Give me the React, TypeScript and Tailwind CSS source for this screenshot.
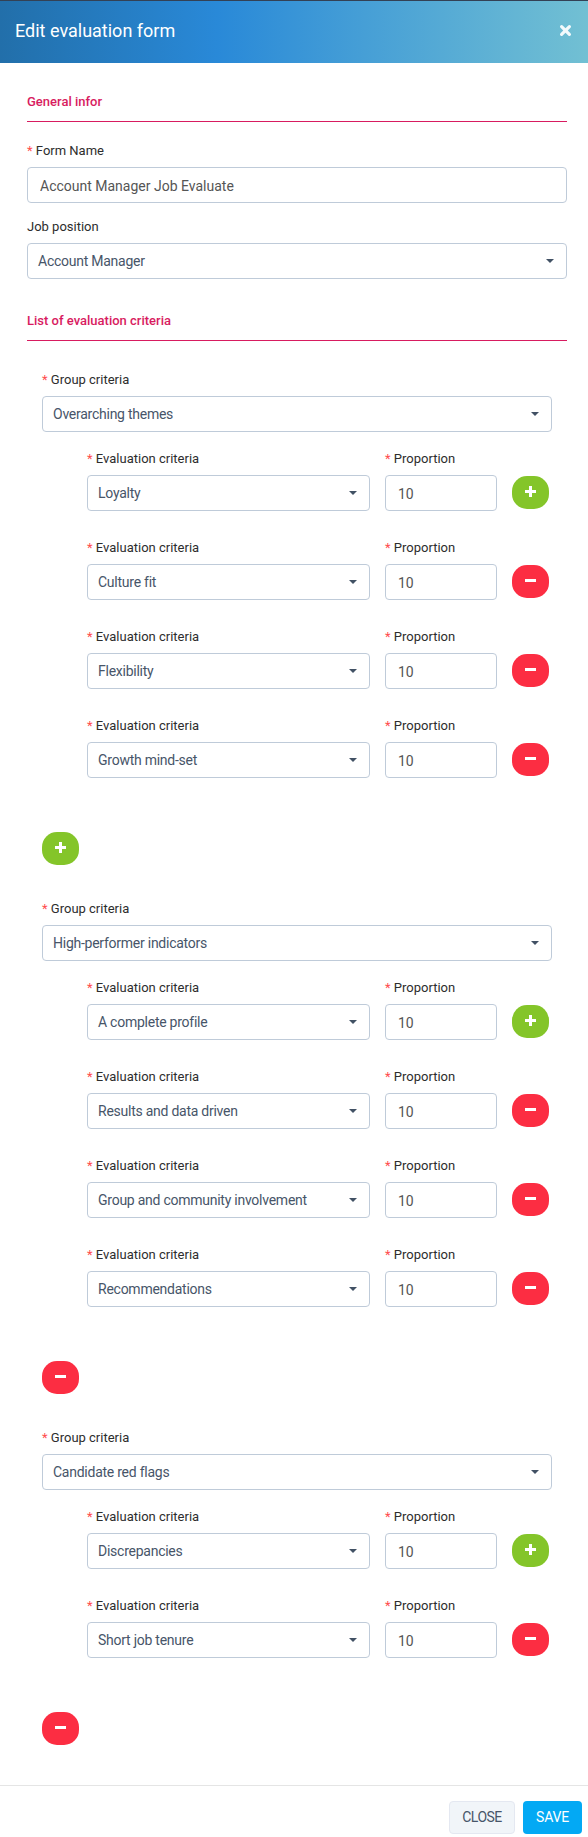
import React from 'react';

interface Criteria {
  name: string;
  proportion: number;
}

interface Group {
  name: string;
  criteria: Criteria[];
}

const GROUPS: Group[] = [
  {
    name: 'Overarching themes',
    criteria: [
      { name: 'Loyalty', proportion: 10 },
      { name: 'Culture fit', proportion: 10 },
      { name: 'Flexibility', proportion: 10 },
      { name: 'Growth mind-set', proportion: 10 },
    ],
  },
  {
    name: 'High-performer indicators',
    criteria: [
      { name: 'A complete profile', proportion: 10 },
      { name: 'Results and data driven', proportion: 10 },
      { name: 'Group and community involvement', proportion: 10 },
      { name: 'Recommendations', proportion: 10 },
    ],
  },
  {
    name: 'Candidate red flags',
    criteria: [
      { name: 'Discrepancies', proportion: 10 },
      { name: 'Short job tenure', proportion: 10 },
    ],
  },
];

const Label = ({ text, required = true }: { text: string; required?: boolean }) => (
  <div className="h-5 mb-1.5 text-[13px] leading-5 text-[#2d2d2d] whitespace-nowrap">
    {required && <span className="text-[#ff4d4d]">* </span>}
    {text}
  </div>
);

const SelectBox = ({ value }: { value: string }) => (
  <button className="flex w-full h-9 items-center justify-between rounded border border-[#bfcbd9] bg-white pl-2.5 pr-3 pt-px text-left text-[14px] tracking-[-0.25px] text-[#475569]">
    <span className="whitespace-nowrap">{value}</span>
    <svg width="8" height="4" viewBox="0 0 8 4" className="mb-px">
      <path d="M0 0h8L4 4z" fill="#415164" />
    </svg>
  </button>
);

const TextBox = ({ value }: { value: string | number }) => (
  <input
    defaultValue={value}
    className="block w-full h-9 rounded border border-[#bfcbd9] bg-white px-3 pt-px text-[14px] text-[#555555] outline-none"
  />
);

const RoundButton = ({ type }: { type: 'add' | 'remove' }) => (
  <button
    className={`flex h-[33px] w-[37px] shrink-0 items-center justify-center rounded-[15px] pb-0.5 ${type === 'add' ? 'bg-[#84c529]' : 'bg-[#fc2d42]'}`}
  >
    <svg width="11" height="11" viewBox="0 0 11 11" fill="#ffffff">
      <rect x="0" y="4" width="11" height="3" />
      {type === 'add' && <rect x="4" y="0" width="3" height="11" />}
    </svg>
  </button>
);

const SectionTitle = ({ text }: { text: string }) => (
  <h5 className="h-[30px] border-b border-[#d81b60] text-[13px] font-medium leading-5 text-[#d81b60]">{text}</h5>
);

const App: React.FC = () => {
  return (
    <div className="min-h-[1837px] w-full border-t border-[#334155] bg-white font-['Roboto',sans-serif]">
      {/* Header */}
      <div className="flex h-[62px] items-center justify-between bg-[linear-gradient(to_right,#226faa_0%,#2989d8_37%,#72c0d3_100%)] pl-[15px] pr-4 pb-[3px] text-white">
        <h4 className="text-[18px]">Edit evaluation form</h4>
        <button>
          <svg width="13" height="13" viewBox="0 0 13 13" stroke="#f3fafc" strokeWidth="3.2" strokeLinecap="round">
            <path d="M2.6 2.6l7.8 7.8M10.4 2.6l-7.8 7.8" />
          </svg>
        </button>
      </div>

      {/* Body */}
      <div className="pl-[27px] pr-[21px] pt-[29px]">
        <SectionTitle text="General infor" />
        <div className="mt-[19px]">
          <Label text="Form Name" />
          <TextBox value="Account Manager Job Evaluate" />
        </div>
        <div className="mt-3.5 mb-8">
          <Label text="Job position" required={false} />
          <SelectBox value="Account Manager" />
        </div>

        <SectionTitle text="List of evaluation criteria" />
        <div className="mt-[29px] flex flex-col gap-[34px] px-[15px]">
          {GROUPS.map((group, index) => (
            <div key={group.name}>
              <Label text="Group criteria" />
              <SelectBox value={group.name} />
              <div className="mt-[17px] mb-[54px] flex flex-col gap-[27px] pl-[45px] pr-[3px]">
                {group.criteria.map((item, i) => (
                  <div key={item.name} className="flex items-end gap-[15px]">
                    <div className="w-[283px]">
                      <Label text="Evaluation criteria" />
                      <SelectBox value={item.name} />
                    </div>
                    <div className="w-28">
                      <Label text="Proportion" />
                      <TextBox value={item.proportion} />
                    </div>
                    <div className="pb-0.5">
                      <RoundButton type={i === 0 ? 'add' : 'remove'} />
                    </div>
                  </div>
                ))}
              </div>
              <RoundButton type={index === 0 ? 'add' : 'remove'} />
            </div>
          ))}
        </div>
      </div>

      {/* Footer */}
      <div className="mt-10 flex justify-end gap-2 border-t border-[#e5e5e5] pt-[15px] pr-1.5 text-[14px]">
        <button className="h-[33px] w-[66px] rounded border border-[#e4e8f1] bg-[#f1f5f9] tracking-[-0.5px] text-[#475569]">CLOSE</button>
        <button className="h-[33px] w-[59px] rounded bg-[#03a9f4] tracking-[-0.2px] text-white">SAVE</button>
      </div>
    </div>
  );
};

export default App;
